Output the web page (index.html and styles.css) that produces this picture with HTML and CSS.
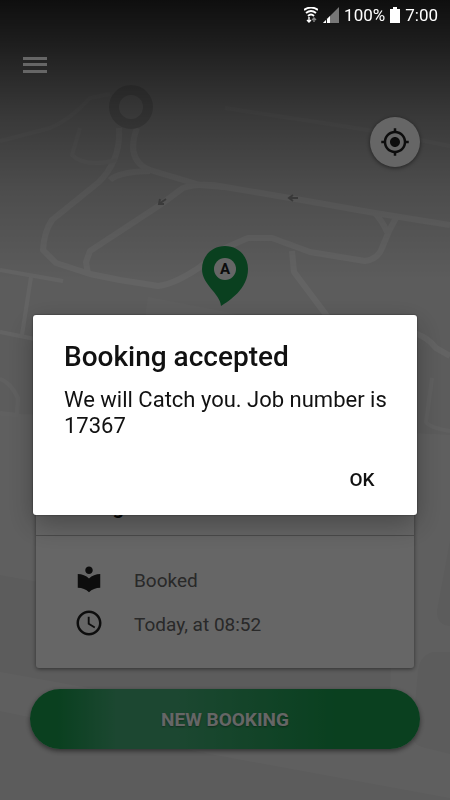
FILE: index.html
```html
<!DOCTYPE html>
<html lang="en">
<head>
    <meta charset="UTF-8">
    <meta name="viewport" content="width=device-width, initial-scale=1.0">
    <title>Booking</title>
    <link rel="stylesheet" href="styles.css">
</head>
<body>

    <div class="screen">
        <svg class="map" viewBox="0 0 450 800" preserveAspectRatio="xMidYMid slice" aria-hidden="true">
            <rect width="450" height="800" fill="#e6e6e6"/>
            <path d="M148 297L225 312L300 330H144Z" fill="#ebebeb"/>
            <path d="M0 413L450 435V798L210 754L0 711V672L388 742L392 645L0 575Z" fill="#eee"/>
            <g fill="#e6e6e6">
                <path d="M450 540L437 610Q436 625 450 626Z"/>
                <path d="M450 652H432Q420 656 418 670L412 735Q413 746 425 748L450 754Z"/>
            </g>
            <g class="roads">
                <path d="M119 128Q121 160 99 182L52 220Q44 232 43 250L56 263L90 274L120 280L158 286Q175 284 200 267L225 248L248 238H272L310 252L365 261Q378 259 382 248L389 231L397 216"/>
                <path d="M137 128Q125 160 150 170L200 185L225 187L290 198L375 213L450 225"/>
                <path d="M88 274L86 262L90 251L160 205L183 188Q200 182 225 187"/>
                <path d="M110 180Q118 172 150 171"/>
                <path d="M375 213Q383 222 387 232"/>
                <path d="M292 251L294 272L330 320L380 330L417 334Q428 338 436 348L450 356"/>
            </g>
            <g class="roads roads-thin">
                <path d="M0 270L63 281"/>
                <path d="M31 277L22 335M0 332L35 339"/>
            </g>
            <g class="roads roads-faint">
                <path d="M0 141L50 128Q70 120 90 98L110 94"/>
                <path d="M0 379Q10 382 18 398L17 415L0 413"/>
                <path d="M432 378L426 422Q430 428 450 431"/>
                <path d="M80 128L72 155Q85 168 117 160"/>
                <path d="M225 108L330 124L380 132L450 146"/>
            </g>
            <circle cx="131" cy="107" r="17" fill="none" stroke="#c4c4c4" stroke-width="10"/>
            <path d="M298 198H289M293 195L289 198L293 201M166 199L159 204M160 199L159 204L164 204" fill="none" stroke="#aaa" stroke-width="2"/>
        </svg>
        <div class="map-shade"></div>

        <svg class="pin" viewBox="0 0 46 60" role="img" aria-label="Pickup point">
            <path d="M23 0C10 0 0 10 0 23C0 39 18 47 19 60C27 55 46 43 46 23C46 10 36 0 23 0Z" fill="#19a04f"/>
            <circle cx="23" cy="23" r="11" fill="#fff"/>
            <text x="23" y="28" text-anchor="middle">A</text>
        </svg>

        <header class="toolbar">
            <button class="menu-button" type="button" aria-label="Menu">
                <svg width="24" height="16" viewBox="0 0 24 16" fill="#fff"><path d="M0 0h24v3H0zM0 6h24v3H0zM0 13h24v3H0z"/></svg>
            </button>
            <button class="locate-button" type="button" aria-label="My location">
                <svg width="30" height="30" viewBox="0 0 24 24" fill="#222"><path d="M12 8c-2.210 0-4 1.790-4 4s1.790 4 4 4 4-1.790 4-4-1.790-4-4-4zm8.940 3c-.46-4.170-3.770-7.480-7.940-7.940V1h-2v2.060C6.830 3.520 3.520 6.830 3.060 11H1v2h2.060c.46 4.170 3.770 7.480 7.940 7.940V23h2v-2.060c4.170-.46 7.480-3.770 7.940-7.940H23v-2h-2.060zM12 19c-3.870 0-7-3.130-7-7s3.130-7 7-7 7 3.130 7 7-3.130 7-7 7z"/></svg>
            </button>
        </header>

        <main class="booking">
            <section class="card">
                <h2 class="card-title">Booking</h2>
                <ul class="details">
                    <li>
                        <svg width="30" height="30" viewBox="0 0 24 24"><path d="M12 11.550C9.640 9.350 6.480 8 3 8v11c3.480 0 6.640 1.350 9 3.550 2.360-2.190 5.520-3.550 9-3.550V8c-3.480 0-6.640 1.350-9 3.550zM12 8c1.660 0 3-1.340 3-3s-1.340-3-3-3-3 1.340-3 3 1.340 3 3 3z"/></svg>
                        <span>Booked</span>
                    </li>
                    <li>
                        <svg width="30" height="30" viewBox="0 0 24 24"><path d="M11.990 2C6.470 2 2 6.480 2 12s4.470 10 9.990 10C17.520 22 22 17.520 22 12S17.520 2 11.990 2zM12 20c-4.420 0-8-3.580-8-8s3.580-8 8-8 8 3.580 8 8-3.580 8-8 8zm.5-13H11v6l5.250 3.150.75-1.230-4.500-2.670z"/></svg>
                        <span>Today, at 08:52</span>
                    </li>
                </ul>
            </section>
            <button class="new-booking" type="button">NEW BOOKING</button>
        </main>
    </div>

    <div class="overlay">
        <div class="dialog" role="alertdialog" aria-modal="true" aria-labelledby="dialog_title" aria-describedby="dialog_text">
            <h1 id="dialog_title">Booking accepted</h1>
            <p id="dialog_text">We will Catch you. Job number is 17367</p>
            <button class="ok-button" type="button">OK</button>
        </div>
    </div>

    <div class="status-bar">
        <svg width="14" height="16" viewBox="0 0 14 16" fill="none" stroke="#fff">
            <path d="M0 3Q7-2 14 3M2 6Q7 2 12 6M4 9Q7 6 10 9" stroke-width="1.900"/>
            <path d="M5 10v5M3 13l2 2 2-2" stroke-width="1.400"/>
            <path d="M10 15v-4M8 13l2-2 2 2" stroke="#888" stroke-width="1.400"/>
        </svg>
        <svg width="16" height="16" viewBox="0 0 16 16">
            <path d="M16 0v16H0z" fill="#777"/>
            <path d="M7 9v7H0z" fill="#fff"/>
            <path d="M3.500 11v5" stroke="#222"/>
        </svg>
        <span>100%</span>
        <svg width="10" height="16" viewBox="0 0 10 16" fill="#fff"><path d="M3 0h4v2h3v14H0V2h3z"/></svg>
        <span>7:00</span>
    </div>

</body>
</html>
```
FILE: styles.css
```css
* { box-sizing: border-box; }
body { font-family: Roboto, Arial, sans-serif; margin: 0; color: #111; }
button { font-family: inherit; border: none; padding: 0; cursor: pointer; }
svg { display: block; flex: none; }

.screen { position: relative; min-height: 100vh; display: flex; flex-direction: column; justify-content: space-between; overflow: hidden; }

.map { position: absolute; top: 0; left: 0; width: 100%; height: 100%; }
.roads { fill: none; stroke: #f8f8f8; stroke-width: 6; stroke-linejoin: round; }
.roads-thin { stroke-width: 4; }
.roads-faint { stroke: #f0f0f0; stroke-width: 4; }
.map-shade { position: absolute; top: 0; left: 0; right: 0; height: 280px; background: linear-gradient(rgba(0, 0, 0, 0.84), rgba(0, 0, 0, 0.67) 16%, rgba(0, 0, 0, 0.52) 29%, rgba(0, 0, 0, 0.37) 43%, rgba(0, 0, 0, 0.17) 68%, rgba(0, 0, 0, 0)); }

.pin { position: absolute; left: calc(50% - 23px); top: 246px; width: 46px; height: 60px; }
.pin text { font-size: 15px; font-weight: bold; fill: #222; }

.toolbar { position: relative; display: flex; justify-content: space-between; padding: 57px 30px 0 23px; }
.menu-button { align-self: flex-start; background: none; }
.locate-button { display: flex; align-items: center; justify-content: center; width: 50px; height: 50px; margin-top: 60px; border-radius: 50%; background: #fff; box-shadow: 0 1px 4px rgba(0, 0, 0, 0.5); }

.booking { position: relative; padding: 0 30px 51px; }
.card { margin: 0 6px 21px; background: #fff; border-radius: 3px; box-shadow: 0 1px 4px rgba(0, 0, 0, 0.5); }
.card-title { margin: 0; padding: 12px 14px 16px; font-size: 20px; line-height: 24px; border-bottom: 1px solid #bbb; }
.details { list-style: none; margin: 0; padding: 30px 38px 28px; display: grid; gap: 14px; }
.details li { display: flex; align-items: center; gap: 30px; font-size: 19px; line-height: 30px; color: #666; }
.details svg { margin: -2px 0 2px; fill: #222; }
.new-booking { display: block; width: 100%; height: 60px; border-radius: 30px; font-size: 19px; font-weight: bold; color: #fff; background: linear-gradient(to right, #19a04f 7%, #46b27a 22%, #46b27a 38%, #19a04f 78%); box-shadow: 0 2px 5px rgba(0, 0, 0, 0.5); text-shadow: 0 1px 2px rgba(0, 0, 0, 0.4); }

.overlay { position: fixed; top: 0; left: 0; right: 0; bottom: 0; display: flex; align-items: center; justify-content: center; padding: 30px 33px 0; background: rgba(0, 0, 0, 0.6); }
.dialog { width: 100%; max-width: 480px; display: flex; flex-direction: column; padding: 26px 24px 20px 31px; background: #fff; border-radius: 3px; box-shadow: 0 10px 28px rgba(0, 0, 0, 0.3), 0 0 2px rgba(0, 0, 0, 0.6); }
.dialog h1 { margin: 0 0 14px; font-size: 28px; line-height: 32px; font-weight: 500; }
.dialog p { margin: 0 0 25px; font-size: 22px; line-height: 26px; }
.ok-button { align-self: flex-end; width: 62px; height: 31px; background: none; font-size: 19px; font-weight: 500; color: #111; }

.status-bar { position: fixed; top: 0; left: 0; right: 0; height: 30px; display: flex; align-items: center; justify-content: flex-end; gap: 5px; padding-right: 12px; font-size: 17px; color: #fff; }
```
